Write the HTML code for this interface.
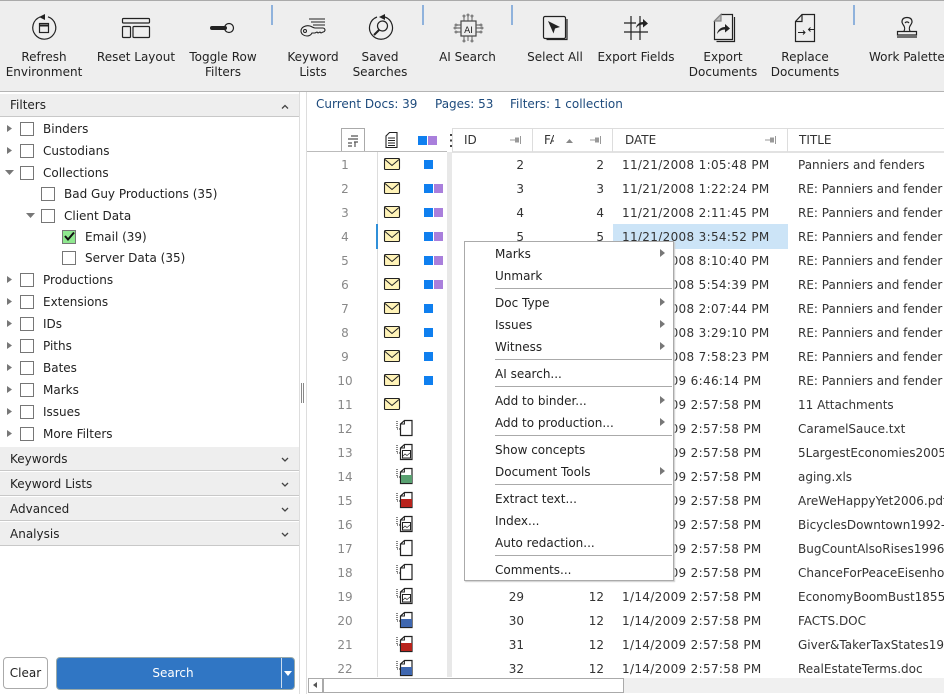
<!DOCTYPE html>
<html><head><meta charset="utf-8"><style>
html,body{margin:0;padding:0;background:#fff}
#p{position:relative;width:944px;height:697px;overflow:hidden;background:#fff;font-family:"DejaVu Sans","Liberation Sans",sans-serif;font-size:12px;color:#222}
#p div,#p span{position:absolute;white-space:nowrap}
.l{line-height:15px;text-align:center;color:#222}
.f{line-height:16px;color:#222}
.acc{left:0;width:299px;height:23px;background:#eee;border-bottom:1px solid #c8c8c8;line-height:24px;text-indent:10px}
.cb{width:12px;height:12px;border:1px solid #767676;background:#fff}
.r{left:307px;width:637px;height:24px;line-height:26px;color:#333}
.r .n{left:0;width:76px;text-align:center;color:#888}
.r .a{left:137px;width:80px;text-align:right}
.r .b{left:217px;width:80px;text-align:right}
.r .d{left:315px;letter-spacing:.33px}
.r .t{left:491px}
.m{left:30px;line-height:16px;color:#222;margin-top:1px}
.s{left:30px;width:177px;height:1px;background:#aaa}
.ar{left:195px;width:0;height:0;border-left:5px solid #777;border-top:4px solid transparent;border-bottom:4px solid transparent}
svg{position:absolute;left:0;top:0;overflow:visible}
</style></head><body><div id="p">

<div style="left:0;top:0;width:944px;height:90px;background:#eee;border-top:1px solid #aaa;border-bottom:1px solid #b4b4b4"></div>
<div style="left:271px;top:5px;width:2px;height:20px;background:#8fb2dc"></div>
<div style="left:422px;top:5px;width:2px;height:20px;background:#8fb2dc"></div>
<div style="left:511px;top:5px;width:2px;height:20px;background:#8fb2dc"></div>
<div style="left:853px;top:5px;width:2px;height:20px;background:#8fb2dc"></div>

<svg width="944" height="92" fill="none" stroke="#222" stroke-width="1.2">
<path d="M48 16.800A11.500 11.500 0 1 1 40 17"/><path d="M45 14v6l-6-3z" fill="#222" stroke="none"/><rect x="39.500" y="23.500" width="9" height="9"/><path d="M39.500 25.500h9" stroke-width="2"/>
<rect x="122.500" y="18.500" width="27" height="4.500" rx="1"/><rect x="122.500" y="26.500" width="8" height="11" rx="1"/><rect x="133" y="26.500" width="16.500" height="11" rx="1"/>
<path d="M212 28h13" stroke-width="4" stroke-linecap="round"/><circle cx="229" cy="28" r="4.500"/>
<path d="M309 19h16M311 22h14M313 25h12" stroke-width="1"/>
<path d="M301 31c0-4 5-6 9-5 2 .5 3 2 5 2h8c1 0 2 1 2 2s-1 2-2 2l-2 1-1-1-2 1-1-1-2 1-3 0c-1 2-3 3-5 3-3 0-6-2-6-5z" fill="#eee" stroke-width="1.100"/><circle cx="305" cy="31" r="1.500" stroke-width="1"/>
<path d="M385 17a11.500 11.500 0 1 1-8 0"/><path d="M385 14v6l-6-3z" fill="#222" stroke="none"/><circle cx="382.500" cy="26" r="5"/><path d="M379 30l-5 5" stroke-width="2"/>
<rect x="461" y="21" width="15" height="15" stroke="#444"/><text x="468.500" y="33" font-family="DejaVu Sans,sans-serif" font-size="9" text-anchor="middle" fill="#222" stroke="none">AI</text>
<path d="M464 21v-4M468 21v-5M472 21v-4M464 36v4M468 36v5M472 36v4M461 25h-4M461 28h-5M461 32h-4M476 25h4M476 28h5M476 32h4" stroke="#555" stroke-width=".9"/>
<g fill="#eee" stroke="#555" stroke-width=".8"><circle cx="464" cy="16" r="1"/><circle cx="468" cy="15" r="1"/><circle cx="472" cy="16" r="1"/><circle cx="456" cy="25" r="1"/><circle cx="455" cy="28" r="1"/><circle cx="456" cy="32" r="1"/><circle cx="481" cy="25" r="1"/><circle cx="482" cy="28" r="1"/><circle cx="481" cy="32" r="1"/><circle cx="464" cy="41" r="1"/><circle cx="472" cy="41" r="1"/></g>
<rect x="543.500" y="16.500" width="22" height="22" rx="1.500"/><path d="M567 19v20.500h-20.500"/><path d="M548 21l12 6-5 1.500-1.500 5z" fill="#222" stroke="none"/>
<path d="M631 16v24M640 16v24M624 23h12M624 32h24"/><path d="M636 28c.5-4 4-6 7-6v-3l5 4.500-5 4v-3c-3 0-5 1-7 3.500z" fill="#222" stroke="none"/>
<path d="M721 14.500h11.500v25h-18v-18.500z" fill="#eee"/><path d="M734.500 17v24.500h-18"/><path d="M714.500 21h6.500v-6.500z" fill="#bbb" stroke="#888"/><path d="M717 34c.5-4 4-7 8-7v-3l5 4.500-5 4v-3c-3 0-6 1.500-8 4.500z" fill="#222" stroke="none"/>
<path d="M802 14.500h12.500v27h-19v-20z"/><path d="M795.500 21.500h6.500v-7"/><path d="M798 32.500h7M803 30.500l2 2-2 2M815 29.500h-6.500M810.500 27.500l-2 2 2 2" stroke-width="1"/>
<path d="M904 31c1-2 1-3 0-5-1-1.500-2-3-2-4 0-3 2-4.500 5-4.500s5 1.500 5 4.500c0 1-1 2.500-2 4-1 2-1 3 0 5"/><path d="M905 23c1-1.500 3-1.500 4 0"/><path d="M897.500 31.500h19v3.500h-19z"/><path d="M897 37h20"/>
</svg>

<div class="l" style="left:0;width:88px;top:50px">Refresh<br>Environment</div>
<div class="l" style="left:90px;width:92px;top:50px">Reset Layout</div>
<div class="l" style="left:178px;width:90px;top:50px">Toggle Row<br>Filters</div>
<div class="l" style="left:278px;width:70px;top:50px">Keyword<br>Lists</div>
<div class="l" style="left:345px;width:70px;top:50px">Saved<br>Searches</div>
<div class="l" style="left:428px;width:79px;top:50px">AI Search</div>
<div class="l" style="left:515px;width:80px;top:50px">Select All</div>
<div class="l" style="left:590px;width:92px;top:50px">Export Fields</div>
<div class="l" style="left:683px;width:80px;top:50px">Export<br>Documents</div>
<div class="l" style="left:765px;width:80px;top:50px">Replace<br>Documents</div>
<div class="l" style="left:869px;top:50px;text-align:left">Work Palette</div>

<div style="left:0;top:92px;width:299px;height:605px;background:#fff"></div>
<div class="acc" style="top:94px;height:22px;line-height:22px">Filters</div>
<div style="left:299px;top:92px;width:1px;height:602px;background:#ddd"></div>
<div style="left:306px;top:92px;width:1px;height:602px;background:#ddd"></div>
<div style="left:301px;top:383px;width:1px;height:20px;background:#888"></div>
<div style="left:303px;top:383px;width:1px;height:20px;background:#888"></div>

<svg width="300" height="560" fill="#777" stroke="none">
<path d="M7 125v7l5-3.500zM7 147v7l5-3.500zM5 170h9l-4.500 5zM26 213h9l-4.500 5zM7 276v7l5-3.500zM7 298v7l5-3.500zM7 320v7l5-3.500zM7 342v7l5-3.500zM7 364v7l5-3.500zM7 386v7l5-3.500zM7 408v7l5-3.500zM7 430v7l5-3.500z"/>
<path d="M282 108.500l3-3 3 3" fill="none" stroke="#444" stroke-width="1.300"/>
</svg>

<div class="cb" style="left:20px;top:122px"></div><div class="f" style="left:43px;top:121px">Binders</div>
<div class="cb" style="left:20px;top:144px"></div><div class="f" style="left:43px;top:143px">Custodians</div>
<div class="cb" style="left:20px;top:166px"></div><div class="f" style="left:43px;top:165px">Collections</div>
<div class="cb" style="left:41px;top:187px"></div><div class="f" style="left:64px;top:186px">Bad Guy Productions (35)</div>
<div class="cb" style="left:41px;top:209px"></div><div class="f" style="left:64px;top:208px">Client Data</div>
<div class="cb" style="left:62px;top:230px;background:#8fe88f"></div><svg width="100" height="250" fill="none"><path d="M65 236l3 3.500 6-7" stroke="#111" stroke-width="2"/></svg><div class="f" style="left:85px;top:229px">Email (39)</div>
<div class="cb" style="left:62px;top:251px"></div><div class="f" style="left:85px;top:250px">Server Data (35)</div>
<div class="cb" style="left:20px;top:273px"></div><div class="f" style="left:43px;top:272px">Productions</div>
<div class="cb" style="left:20px;top:295px"></div><div class="f" style="left:43px;top:294px">Extensions</div>
<div class="cb" style="left:20px;top:317px"></div><div class="f" style="left:43px;top:316px">IDs</div>
<div class="cb" style="left:20px;top:339px"></div><div class="f" style="left:43px;top:338px">Piths</div>
<div class="cb" style="left:20px;top:361px"></div><div class="f" style="left:43px;top:360px">Bates</div>
<div class="cb" style="left:20px;top:383px"></div><div class="f" style="left:43px;top:382px">Marks</div>
<div class="cb" style="left:20px;top:405px"></div><div class="f" style="left:43px;top:404px">Issues</div>
<div class="cb" style="left:20px;top:427px"></div><div class="f" style="left:43px;top:426px">More Filters</div>

<div class="acc" style="top:447px">Keywords</div>
<div class="acc" style="top:472px">Keyword Lists</div>
<div class="acc" style="top:497px">Advanced</div>
<div class="acc" style="top:522px">Analysis</div>
<svg width="300" height="560" fill="none"><path d="M282 458l3 3 3-3M282 483l3 3 3-3M282 508l3 3 3-3M282 533l3 3 3-3" stroke="#444" stroke-width="1.300"/></svg>

<div style="left:3px;top:657px;width:43px;height:30px;border:1px solid #aaa;border-radius:4px;text-align:center;line-height:30px;color:#222">Clear</div>
<div style="left:56px;top:657px;width:237px;height:31px;background:#3076c4;border:1px solid #9aa;border-radius:4px"></div>
<div style="left:57px;top:657px;width:232px;text-align:center;line-height:32px;color:#fff">Search</div>
<div style="left:281px;top:658px;width:1px;height:30px;background:#cde"></div>
<div style="left:284px;top:671px;width:0;height:0;border-left:4.500px solid transparent;border-right:4.500px solid transparent;border-top:5px solid #fff"></div>

<div class="f" style="left:316px;top:96px;color:#1d4a7c">Current Docs: 39</div>
<div class="f" style="left:435px;top:96px;color:#1d4a7c">Pages: 53</div>
<div class="f" style="left:510px;top:96px;color:#1d4a7c">Filters: 1 collection</div>

<div style="left:341px;top:128px;width:22px;height:22px;border:1px solid #aaa"></div>
<div style="left:307px;top:151px;width:140px;height:1px;background:#bbb"></div>
<div style="left:377px;top:152px;width:1px;height:525px;background:#ddd"></div>
<div style="left:447px;top:152px;width:5px;height:525px;background:#e8e8e8"></div>
<div style="left:452px;top:128px;width:492px;height:1px;background:#ddd"></div>
<div style="left:452px;top:151px;width:492px;height:2px;background:#e2e2e2"></div>
<div style="left:452px;top:128px;width:1px;height:24px;background:#ddd"></div>
<div style="left:532px;top:128px;width:1px;height:24px;background:#ddd"></div>
<div style="left:612px;top:128px;width:1px;height:24px;background:#ddd"></div>
<div style="left:787px;top:128px;width:1px;height:24px;background:#ddd"></div>
<div class="f" style="left:464px;top:132px;color:#333">ID</div>
<div class="f" style="left:544px;top:132px;width:10px;overflow:hidden;color:#333">FA</div>
<div class="f" style="left:625px;top:132px;color:#333">DATE</div>
<div class="f" style="left:799px;top:132px;color:#333">TITLE</div>

<svg width="944" height="697" fill="none" stroke="#222">
<defs>
<g id="pin" stroke="#999" fill="#999" stroke-width="1"><path d="M0 4h5"/><path d="M5 1.500h4v5h-4z" stroke="none"/><path d="M10.500 0v8"/></g>
<g id="mail"><rect x=".5" y=".5" width="15" height="11" rx="1" fill="#fff3b8" stroke="#222" stroke-width="1.100"/><path d="M1 1.500l7 6 7-6" stroke="#222"/></g>
<g id="dots"><path d="M1 1v8h3" stroke="#222" stroke-dasharray="1 1" stroke-width="1.100"/></g>
<g id="page"><path d="M4.500.5h7.500v15h-11.500v-11.500z" fill="#fff" stroke="#222" stroke-width="1.200"/><path d="M4.500 .5v3.500h-4" stroke="#222" stroke-width=".9"/></g>
<g id="d0"><use href="#dots"/><use href="#page" x="4"/></g>
<g id="di"><use href="#dots"/><use href="#page" x="4"/><rect x="6.500" y="6.500" width="8" height="7.500" stroke="#222" stroke-width="1"/><path d="M7 12l2-2 2 1.500 3-2.500" stroke="#333" stroke-width=".8"/></g>
<g id="dg"><use href="#dots"/><use href="#page" x="4"/><rect x="5" y="7" width="11" height="8" fill="#58a070" stroke="none"/></g>
<g id="dr"><use href="#dots"/><use href="#page" x="4"/><rect x="5" y="7" width="11" height="8" fill="#b8231c" stroke="none"/></g>
<g id="db"><use href="#dots"/><use href="#page" x="4"/><rect x="5" y="7" width="11" height="8" fill="#3f67b0" stroke="none"/></g>
</defs>
<use href="#pin" x="510" y="136"/><use href="#pin" x="590" y="136"/><use href="#pin" x="765" y="136"/>
<path d="M566 143l3.500-4 3.500 4z" fill="#888" stroke="none"/>
<path d="M351 136h7M348 139h10M348 143h4M354 142h4M348 146h4M355 142v5" stroke="#555" stroke-width="1.200"/>
<path d="M389.500 132.500h7.500v15h-11v-11.500z" fill="#fff" stroke-width="1.100"/><path d="M388 138h7M388 140.500h7M388 143h7M388 145.500h7" stroke-width=".9"/>
<rect x="418" y="136" width="9" height="9" fill="#0f7fef" stroke="none"/><rect x="428" y="136" width="9" height="9" fill="#a97fdc" stroke="none"/>
<path d="M451 134v2M451 139.500v2M451 145v2" stroke="#444" stroke-width="2"/>
</svg>

<div style="left:613px;top:224px;width:175px;height:25px;background:#cce4f7"></div>
<div style="left:376px;top:224px;width:2px;height:25px;background:#2f8fd8"></div>

<div class="r" style="top:152px"><span class="n">1</span><span class="a">2</span><span class="b">2</span><span class="d">11/21/2008 1:05:48 PM</span><span class="t">Panniers and fenders</span></div>
<div class="r" style="top:176px"><span class="n">2</span><span class="a">3</span><span class="b">3</span><span class="d">11/21/2008 1:22:24 PM</span><span class="t">RE: Panniers and fender</span></div>
<div class="r" style="top:200px"><span class="n">3</span><span class="a">4</span><span class="b">4</span><span class="d">11/21/2008 2:11:45 PM</span><span class="t">RE: Panniers and fender</span></div>
<div class="r" style="top:224px"><span class="n">4</span><span class="a">5</span><span class="b">5</span><span class="d">11/21/2008 3:54:52 PM</span><span class="t">RE: Panniers and fender</span></div>
<div class="r" style="top:248px"><span class="n">5</span><span class="d">11/21/2008 8:10:40 PM</span><span class="t">RE: Panniers and fender</span></div>
<div class="r" style="top:272px"><span class="n">6</span><span class="d">11/21/2008 5:54:39 PM</span><span class="t">RE: Panniers and fender</span></div>
<div class="r" style="top:296px"><span class="n">7</span><span class="d">11/21/2008 2:07:44 PM</span><span class="t">RE: Panniers and fender</span></div>
<div class="r" style="top:320px"><span class="n">8</span><span class="d">11/21/2008 3:29:10 PM</span><span class="t">RE: Panniers and fender</span></div>
<div class="r" style="top:344px"><span class="n">9</span><span class="d">11/21/2008 7:58:23 PM</span><span class="t">RE: Panniers and fender</span></div>
<div class="r" style="top:368px"><span class="n">10</span><span class="d">1/14/2009 6:46:14 PM</span><span class="t">RE: Panniers and fender</span></div>
<div class="r" style="top:392px"><span class="n">11</span><span class="d">1/14/2009 2:57:58 PM</span><span class="t">11 Attachments</span></div>
<div class="r" style="top:416px"><span class="n">12</span><span class="d">1/14/2009 2:57:58 PM</span><span class="t">CaramelSauce.txt</span></div>
<div class="r" style="top:440px"><span class="n">13</span><span class="d">1/14/2009 2:57:58 PM</span><span class="t">5LargestEconomies2005</span></div>
<div class="r" style="top:464px"><span class="n">14</span><span class="d">1/14/2009 2:57:58 PM</span><span class="t">aging.xls</span></div>
<div class="r" style="top:488px"><span class="n">15</span><span class="d">1/14/2009 2:57:58 PM</span><span class="t">AreWeHappyYet2006.pdf</span></div>
<div class="r" style="top:512px"><span class="n">16</span><span class="d">1/14/2009 2:57:58 PM</span><span class="t">BicyclesDowntown1992-1</span></div>
<div class="r" style="top:536px"><span class="n">17</span><span class="d">1/14/2009 2:57:58 PM</span><span class="t">BugCountAlsoRises1996</span></div>
<div class="r" style="top:560px"><span class="n">18</span><span class="d">1/14/2009 2:57:58 PM</span><span class="t">ChanceForPeaceEisenhow</span></div>
<div class="r" style="top:584px"><span class="n">19</span><span class="a">29</span><span class="b">12</span><span class="d">1/14/2009 2:57:58 PM</span><span class="t">EconomyBoomBust1855-</span></div>
<div class="r" style="top:608px"><span class="n">20</span><span class="a">30</span><span class="b">12</span><span class="d">1/14/2009 2:57:58 PM</span><span class="t">FACTS.DOC</span></div>
<div class="r" style="top:632px"><span class="n">21</span><span class="a">31</span><span class="b">12</span><span class="d">1/14/2009 2:57:58 PM</span><span class="t">Giver&amp;TakerTaxStates19</span></div>
<div class="r" style="top:656px"><span class="n">22</span><span class="a">32</span><span class="b">12</span><span class="d">1/14/2009 2:57:58 PM</span><span class="t">RealEstateTerms.doc</span></div>

<svg width="944" height="697" fill="none">
<use href="#mail" x="384" y="158"/><use href="#mail" x="384" y="182"/><use href="#mail" x="384" y="206"/><use href="#mail" x="384" y="230"/><use href="#mail" x="384" y="254"/><use href="#mail" x="384" y="278"/><use href="#mail" x="384" y="302"/><use href="#mail" x="384" y="326"/><use href="#mail" x="384" y="350"/><use href="#mail" x="384" y="374"/><use href="#mail" x="384" y="398"/>
<use href="#d0" x="396" y="420"/><use href="#di" x="396" y="444"/><use href="#dg" x="396" y="468"/><use href="#dr" x="396" y="492"/><use href="#di" x="396" y="516"/><use href="#d0" x="396" y="540"/><use href="#d0" x="396" y="564"/><use href="#di" x="396" y="588"/><use href="#db" x="396" y="612"/><use href="#dr" x="396" y="636"/><use href="#db" x="396" y="660"/>
<g fill="#0f7fef"><rect x="424" y="160" width="9" height="9"/><rect x="424" y="184" width="9" height="9"/><rect x="424" y="208" width="9" height="9"/><rect x="424" y="232" width="9" height="9"/><rect x="424" y="256" width="9" height="9"/><rect x="424" y="280" width="9" height="9"/><rect x="424" y="304" width="9" height="9"/><rect x="424" y="328" width="9" height="9"/><rect x="424" y="352" width="9" height="9"/><rect x="424" y="376" width="9" height="9"/></g>
<g fill="#a97fdc"><rect x="434" y="184" width="9" height="9"/><rect x="434" y="208" width="9" height="9"/><rect x="434" y="232" width="9" height="9"/><rect x="434" y="256" width="9" height="9"/><rect x="434" y="280" width="9" height="9"/></g>
</svg>

<div style="left:307px;top:677px;width:637px;height:20px;background:#fff"></div>
<div style="left:308px;top:678px;width:636px;height:15px;background:#f0f0f0"></div>
<div style="left:308px;top:678px;width:15px;height:15px;border:1px solid #aaa;box-sizing:border-box;background:#fff"></div>
<div style="left:313px;top:682px;width:0;height:0;border-right:4px solid #555;border-top:3.500px solid transparent;border-bottom:3.500px solid transparent"></div>
<div style="left:323px;top:678px;width:301px;height:15px;border:1px solid #aaa;box-sizing:border-box;background:#fff"></div>

<div style="left:464px;top:241px;width:208px;height:338px;background:#fff;border:1px solid #aaa;box-shadow:1px 1px 1px #ccc">
<div class="m" style="top:3px">Marks</div><div class="ar" style="top:7px"></div>
<div class="m" style="top:25px">Unmark</div>
<div class="s" style="top:46px"></div>
<div class="m" style="top:52px">Doc Type</div><div class="ar" style="top:56px"></div>
<div class="m" style="top:74px">Issues</div><div class="ar" style="top:78px"></div>
<div class="m" style="top:96px">Witness</div><div class="ar" style="top:100px"></div>
<div class="s" style="top:117px"></div>
<div class="m" style="top:123px">AI search...</div>
<div class="s" style="top:144px"></div>
<div class="m" style="top:150px">Add to binder...</div><div class="ar" style="top:154px"></div>
<div class="m" style="top:172px">Add to production...</div><div class="ar" style="top:176px"></div>
<div class="s" style="top:193px"></div>
<div class="m" style="top:199px">Show concepts</div>
<div class="m" style="top:221px">Document Tools</div><div class="ar" style="top:225px"></div>
<div class="s" style="top:242px"></div>
<div class="m" style="top:248px">Extract text...</div>
<div class="m" style="top:270px">Index...</div>
<div class="m" style="top:292px">Auto redaction...</div>
<div class="s" style="top:313px"></div>
<div class="m" style="top:319px">Comments...</div>
</div>

</div></body></html>
